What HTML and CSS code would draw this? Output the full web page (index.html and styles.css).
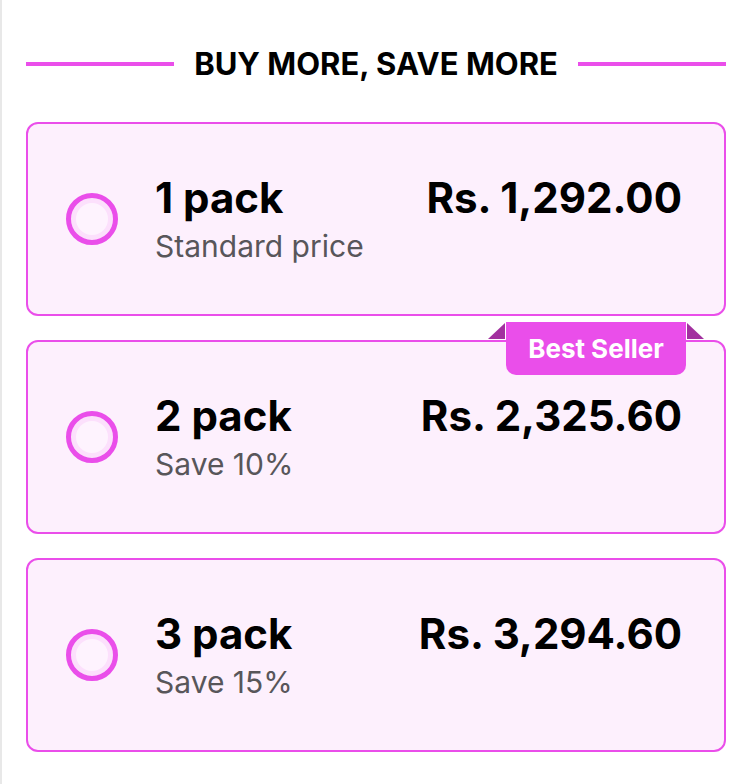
FILE: index.html
```html
<!DOCTYPE html>
<html lang="en">
<head>
<meta charset="utf-8">
<title>Buy more, save more</title>
<link rel="stylesheet" href="styles.css">
</head>
<body>
<div class="page">
  <div class="heading">
    <span class="rule"></span>
    <h2 class="heading-text">BUY MORE, SAVE MORE</h2>
    <span class="rule"></span>
  </div>
  <div class="options">
    <label class="option">
      <span class="radio"></span>
      <div class="info">
        <div class="top">
          <span class="title">1 pack</span>
          <span class="price">Rs. 1,292.00</span>
        </div>
        <div class="sub">Standard price</div>
      </div>
    </label>
    <label class="option">
      <span class="badge">Best Seller</span>
      <span class="radio"></span>
      <div class="info">
        <div class="top">
          <span class="title">2 pack</span>
          <span class="price">Rs. 2,325.60</span>
        </div>
        <div class="sub">Save 10%</div>
      </div>
    </label>
    <label class="option">
      <span class="radio"></span>
      <div class="info">
        <div class="top">
          <span class="title">3 pack</span>
          <span class="price">Rs. 3,294.60</span>
        </div>
        <div class="sub">Save 15%</div>
      </div>
    </label>
  </div>
</div>
</body>
</html>
```
FILE: styles.css
```css
* { box-sizing: border-box; }
html, body { margin: 0; padding: 0; background: #fff; }
body { font-family: Inter, "Noto Sans", "Liberation Sans", sans-serif; color: #000; }

.page {
  border-left: 2px solid #e8e8e8;
  min-height: 784px;
  padding: 46px 24px 0;
}

.heading {
  display: flex;
  align-items: center;
  gap: 20px;
  margin-bottom: 40px;
}
.rule {
  flex: 1;
  height: 4px;
  background: #ea4eea;
}
.heading-text {
  margin: 0;
  font-size: 31px;
  line-height: 36px;
  font-weight: 700;
  white-space: nowrap;
}

.options {
  display: flex;
  flex-direction: column;
  gap: 24px;
}

.option {
  position: relative;
  display: flex;
  align-items: center;
  height: 194px;
  padding: 0 42px 0 38px;
  background: #fdf0fd;
  border: 2px solid #ea4eea;
  border-radius: 12px;
}

.radio {
  flex: none;
  width: 52px;
  height: 52px;
  border-radius: 50%;
  border: 5px solid #ea4eea;
  background: #fef3fe;
  box-shadow: inset 0 0 0 5px #fce0fc;
  margin-right: 37px;
}

.info { flex: 1; }
.top {
  display: flex;
  justify-content: space-between;
  align-items: baseline;
}
.title, .price {
  font-size: 42px;
  line-height: 46px;
  font-weight: 700;
}
.sub {
  margin-top: 7px;
  font-size: 30px;
  line-height: 36px;
  color: #58565a;
}

.badge {
  position: absolute;
  top: -20px;
  right: 38px;
  width: 180px;
  height: 53px;
  background: #ea4eea;
  color: #fff;
  font-size: 26px;
  font-weight: 700;
  display: flex;
  align-items: center;
  justify-content: center;
  border-radius: 0 0 10px 10px;
}
.badge::before,
.badge::after {
  content: "";
  position: absolute;
  top: 1px;
  width: 0;
  height: 0;
  border-bottom: 16px solid #a2309f;
}
.badge::before {
  left: -18px;
  border-left: 17px solid transparent;
}
.badge::after {
  right: -18px;
  border-right: 17px solid transparent;
}
```
